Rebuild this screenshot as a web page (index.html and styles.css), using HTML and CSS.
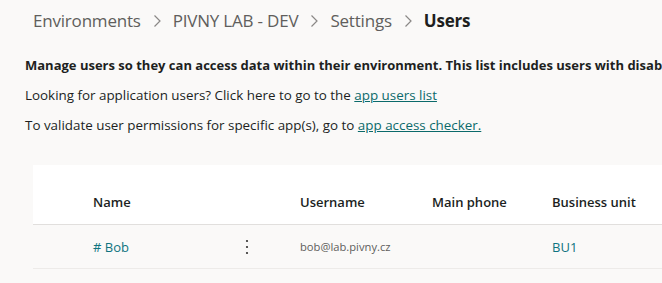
FILE: index.html
```html
<!DOCTYPE html>
<html>
<head>
<meta charset="utf-8">
<link rel="stylesheet" href="styles.css">
</head>
<body>
<nav class="crumbs">
  <span class="crumb">Environments</span>
  <span class="sep"><svg width="9" height="14" viewBox="0 0 9 14"><path d="M1.5 1.5 L7 7 L1.5 12.5" fill="none" stroke="#8a8886" stroke-width="1.2"/></svg></span>
  <span class="crumb">PIVNY LAB - DEV</span>
  <span class="sep"><svg width="9" height="14" viewBox="0 0 9 14"><path d="M1.5 1.5 L7 7 L1.5 12.5" fill="none" stroke="#8a8886" stroke-width="1.2"/></svg></span>
  <span class="crumb">Settings</span>
  <span class="sep"><svg width="9" height="14" viewBox="0 0 9 14"><path d="M1.5 1.5 L7 7 L1.5 12.5" fill="none" stroke="#8a8886" stroke-width="1.2"/></svg></span>
  <span class="crumb current">Users</span>
</nav>
<section class="intro">
  <p class="lead">Manage users so they can access data within their environment. This list includes users with disabled accounts.</p>
  <p class="line">Looking for application users? Click here to go to the <a href="#">app users list</a></p>
  <p class="line">To validate user permissions for specific app(s), go to <a href="#">app access checker.</a></p>
</section>
<div class="grid">
  <div class="row head">
    <div class="c name">Name</div>
    <div class="c user">Username</div>
    <div class="c phone">Main phone</div>
    <div class="c bu">Business unit</div>
  </div>
  <div class="row body">
    <div class="c name">
      <span class="link nametext">#&nbsp;Bob</span>
      <span class="more"><svg width="4" height="16" viewBox="0 0 4 16"><circle cx="2" cy="2" r="1.1" fill="#323130"/><circle cx="2" cy="8" r="1.1" fill="#323130"/><circle cx="2" cy="14" r="1.1" fill="#323130"/></svg></span>
    </div>
    <div class="c user small">bob@lab.pivny.cz</div>
    <div class="c phone"></div>
    <div class="c bu link">BU1</div>
  </div>
</div>
</body>
</html>
```
FILE: styles.css
```css
html, body {
  margin: 0;
  padding: 0;
  background: #faf9f8;
  font-family: "Open Sans", "Noto Sans", sans-serif;
  color: #323130;
  overflow: hidden;
  width: 662px;
}
.crumbs {
  display: flex;
  align-items: center;
  height: 40px;
  padding-left: 33px;
  white-space: nowrap;
}
.crumb {
  font-size: 17px;
  color: #605e5c;
  letter-spacing: -0.2px;
}
.crumb.current {
  color: #201f1e;
  font-weight: 700;
}
.sep {
  display: flex;
  align-items: center;
  margin: 0 11px 0 12px;
  padding-top: 2px;
}
.intro {
  padding-left: 25px;
  padding-top: 17px;
  white-space: nowrap;
  overflow: hidden;
}
.intro p {
  margin: 0;
  font-size: 13.4px;
  line-height: 17px;
  color: #201f1e;
}
.intro .lead {
  font-size: 13px;
  font-weight: 700;
  margin-bottom: 13px;
}
.intro .line {
  margin-bottom: 13px;
}
.intro a {
  color: #0b6a6b;
  text-decoration: underline;
}
.grid {
  margin-top: 18px;
  margin-left: 33px;
  white-space: nowrap;
}
.row {
  display: grid;
  grid-template-columns: 207px 132px 120px 1fr;
  align-items: center;
  padding-left: 60px;
  box-sizing: border-box;
}
.row.head {
  background: #ffffff;
  height: 60px;
  padding-top: 15px;
  border-bottom: 1px solid #e1dfdd;
}
.row.body {
  height: 44px;
  border-bottom: 1px solid #edebe9;
}
.c {
  font-size: 13px;
}
.head .c {
  font-weight: 600;
  color: #201f1e;
}
.body .name {
  display: flex;
  align-items: center;
}
.nametext {
  width: 152px;
}
.more {
  display: flex;
  align-items: center;
}
.link {
  color: #0f7480;
}
.small {
  font-size: 11.2px;
  color: #605e5c;
}
```
